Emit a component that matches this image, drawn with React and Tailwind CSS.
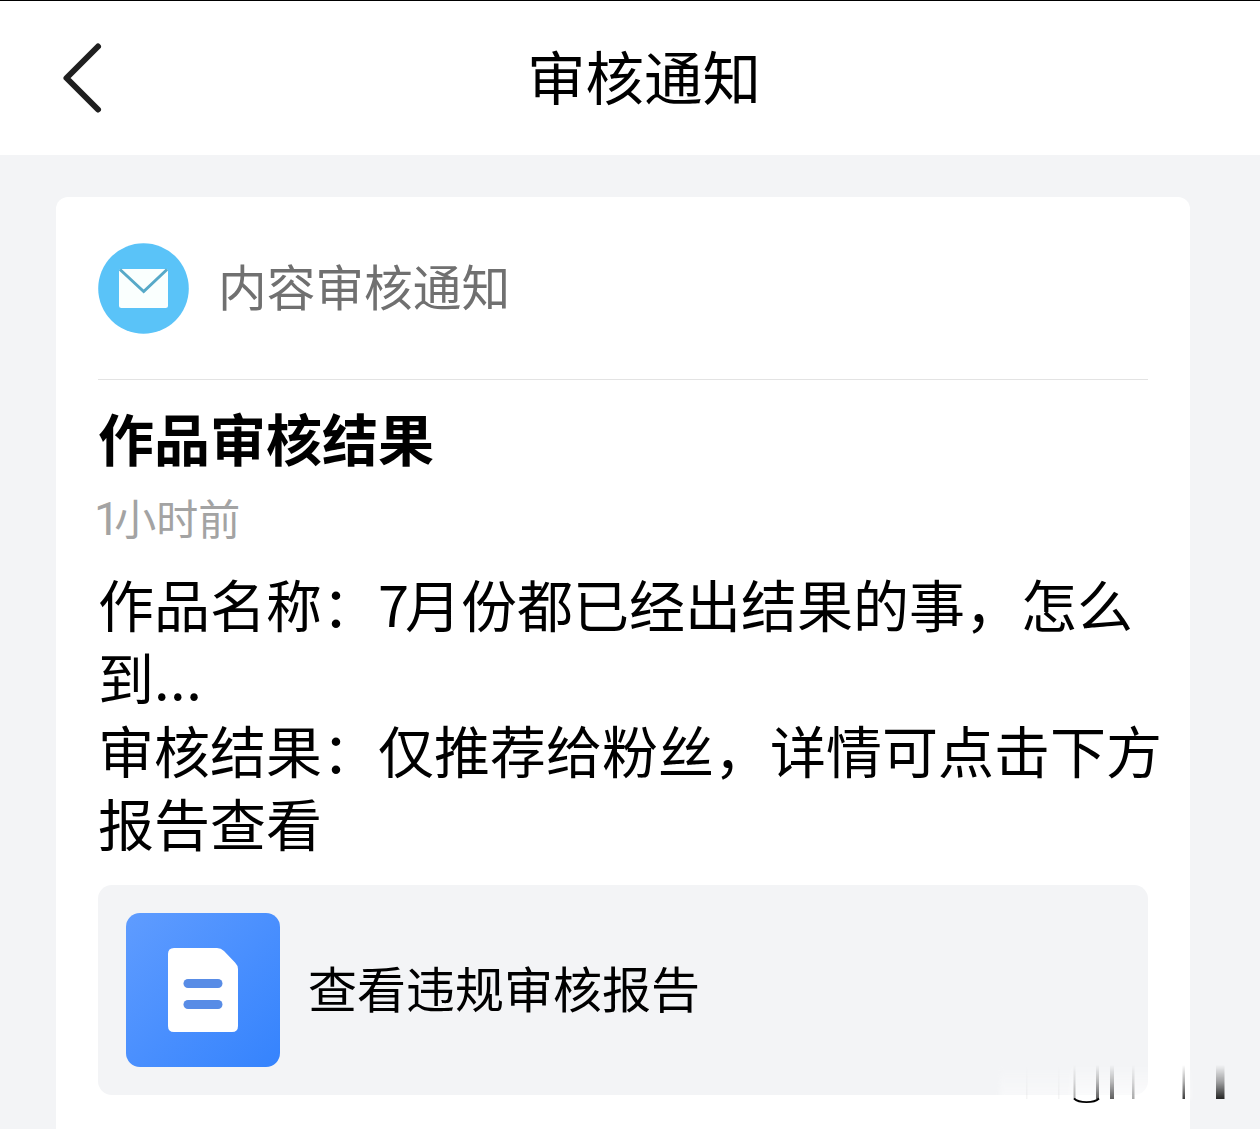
function BackIcon() {
  return (
    <svg
      className="w-[44px] h-[76px] shrink-0"
      viewBox="0 0 44 76"
      fill="none"
      stroke="#1f1f1f"
      strokeWidth="6"
      strokeLinecap="round"
      strokeLinejoin="round"
    >
      <path d="M38 6.5 L6.5 38 L38 69.5" />
    </svg>
  );
}

function MailIcon() {
  return (
    <svg className="w-[91px] h-[91px] shrink-0" viewBox="0 0 91 91" fill="none">
      <circle cx="45.5" cy="45.5" r="45.3" fill="#5ac3f8" />
      <rect x="21" y="26" width="49" height="39" rx="2.5" fill="#fafffe" />
      <path d="M22 26.5 L45.7 48.5 L69 26.5" stroke="#57a9c8" strokeWidth="3" />
    </svg>
  );
}

function ReportIcon() {
  return (
    <svg className="w-[154px] h-[154px] shrink-0" viewBox="0 0 154 154">
      <defs>
        <linearGradient id="report-bg" x1="0" y1="0" x2="1" y2="1">
          <stop offset="0" stopColor="#5f9cff" />
          <stop offset="1" stopColor="#3583fd" />
        </linearGradient>
      </defs>
      <rect width="154" height="154" rx="14" fill="url(#report-bg)" />
      <path
        d="M48 35 H91 Q95 35 98 38 L109 49.5 Q112 52.5 112 56 V113 Q112 119 106 119 H48 Q42 119 42 113 V41 Q42 35 48 35 Z"
        fill="#fff"
      />
      <rect x="57.5" y="66" width="39" height="9" rx="4.5" fill="#588ce6" />
      <rect x="57.5" y="87" width="39" height="9" rx="4.5" fill="#588ce6" />
    </svg>
  );
}

// faded strokes left over from the erased signature in the corner
const STROKES = [
  { x: 31, w: 1.5, o: 0.05 },
  { x: 63, w: 1.5, o: 0.05 },
  { x: 78.5, w: 2, o: 0.4 },
  { x: 101, w: 3, o: 0.75 },
  { x: 115, w: 4, o: 0.75 },
  { x: 137, w: 2.5, o: 0.4 },
  { x: 187.5, w: 2.5, o: 0.9 },
  { x: 221, w: 8.5, o: 1 },
];

function Smudge() {
  return (
    <svg
      className="absolute left-[995px] top-[1060px] w-[240px] h-[48px]"
      viewBox="0 0 240 48"
      fill="none"
    >
      <defs>
        <linearGradient id="haze" x1="0" y1="0" x2="0" y2="1">
          <stop offset="0" stopColor="#fff" stopOpacity="0" />
          <stop offset="1" stopColor="#fff" stopOpacity="0.75" />
        </linearGradient>
        <linearGradient id="ink" x1="0" y1="0" x2="0" y2="1">
          <stop offset="0" stopColor="#000" stopOpacity="0" />
          <stop offset="0.5" stopColor="#000" stopOpacity="0.35" />
          <stop offset="1" stopColor="#000" stopOpacity="0.85" />
        </linearGradient>
        <filter id="soft" x="-10%" y="-10%" width="120%" height="120%">
          <feGaussianBlur stdDeviation="2" />
        </filter>
        <filter id="soft-ink" filterUnits="userSpaceOnUse" x="0" y="0" width="240" height="48">
          <feGaussianBlur stdDeviation="0.7 0" />
        </filter>
      </defs>
      <rect x="5" y="5" width="75" height="34" fill="url(#haze)" filter="url(#soft)" opacity="0.6" />
      <rect x="76" y="5" width="119" height="34" fill="url(#haze)" filter="url(#soft)" />
      <g filter="url(#soft-ink)">
        {STROKES.map((s) => (
          <rect key={s.x} x={s.x} y="5" width={s.w} height="34" fill="url(#ink)" opacity={s.o} />
        ))}
      </g>
      <path d="M79 38.5 C84 43.3 99 43.3 104 38.5" stroke="#000" strokeWidth="1.8" />
    </svg>
  );
}

export default function App() {
  return (
    <div className="relative w-[1260px] h-[1129px] overflow-hidden flex flex-col bg-[#f3f4f6] text-black font-['Noto_Sans_CJK_SC',sans-serif]">
      <header className="h-[155px] shrink-0 border-t border-black bg-white grid grid-cols-3 items-center px-[60px]">
        <BackIcon />
        <h1 className="justify-self-center pl-[28px] pb-[6px] text-[58.5px] leading-none whitespace-nowrap">
          审核通知
        </h1>
      </header>

      <main className="flex-1 mt-[42px] ml-[56px] mr-[70px] px-[42px] rounded-t-xl bg-white">
        <div className="h-[183px] flex items-center gap-[29px] border-b border-[#e3e3e3]">
          <MailIcon />
          <span className="pb-[5px] text-[48.7px] leading-none text-[#707070]">内容审核通知</span>
        </div>

        <h2 className="mt-[21px] text-[56px] leading-[72px] font-bold">作品审核结果</h2>
        <p className="mt-[14px] h-[60px] text-[42px] leading-[60px] text-[#a3a3a3]">
          <span className="-ml-[4px] tracking-[-5.5px] text-[46px] leading-none font-['Roboto',sans-serif]">
            1
          </span>
          小时前
        </p>

        <div className="mt-[19px] text-[56px] leading-[73px] whitespace-nowrap">
          <p>
            作品名称：<span className="tracking-[-4px]">7</span>月份都已经出结果的事，怎么
          </p>
          <p>
            到<span className="tracking-[0.5px]">...</span>
          </p>
          <p>审核结果：仅推荐给粉丝，详情可点击下方</p>
          <p>报告查看</p>
        </div>

        <div className="mt-[27px] h-[210px] p-[28px] flex items-center gap-[28px] rounded-[14px] bg-[#f3f4f6]">
          <ReportIcon />
          <span className="pb-[7px] text-[49px] leading-none">查看违规审核报告</span>
        </div>
      </main>

      <Smudge />
    </div>
  );
}
